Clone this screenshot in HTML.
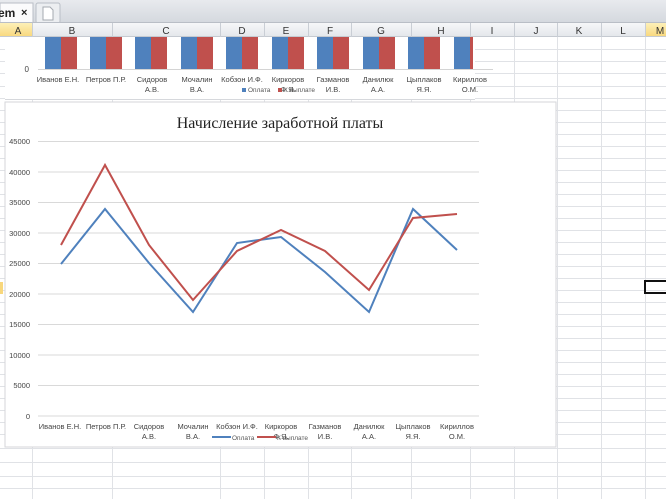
<!DOCTYPE html>
<html><head><meta charset="utf-8"><style>
html,body{margin:0;padding:0;width:666px;height:499px;overflow:hidden;background:#fff;font-family:"Liberation Sans",sans-serif;}
</style></head><body>
<svg width="666" height="499" xmlns="http://www.w3.org/2000/svg" font-family="Liberation Sans, sans-serif">
<defs>
<linearGradient id="tb" x1="0" y1="0" x2="0" y2="1"><stop offset="0" stop-color="#e8eaee"/><stop offset="1" stop-color="#d4d8de"/></linearGradient>
<linearGradient id="hd" x1="0" y1="0" x2="0" y2="1"><stop offset="0" stop-color="#f6f7f9"/><stop offset="1" stop-color="#e3e6ea"/></linearGradient>
<linearGradient id="hs" x1="0" y1="0" x2="0" y2="1"><stop offset="0" stop-color="#fdf0b8"/><stop offset="1" stop-color="#f8d77c"/></linearGradient>
</defs>
<rect x="0" y="0" width="666" height="23" fill="url(#tb)"/>
<rect x="0" y="3" width="33" height="20" fill="#fbfbfc" stroke="#b9bec6"/>
<text x="-2" y="17" font-size="12" font-weight="bold" fill="#222">em</text>
<text x="21" y="16" font-size="11" font-weight="bold" fill="#222">×</text>
<rect x="36" y="3" width="24" height="20" rx="2" fill="#eceef1" stroke="#b9bec6"/>
<path d="M43 7h7l3 3v10h-10z" fill="#fff" stroke="#a4a9b0"/>
<rect x="0" y="22" width="666" height="1" fill="#b9bec6"/>
<rect x="0" y="23" width="666" height="14" fill="url(#hd)"/>
<rect x="0" y="23" width="32" height="14" fill="url(#hs)"/>
<rect x="645" y="23" width="21" height="14" fill="url(#hs)"/>
<rect x="0" y="36" width="666" height="1" fill="#c5cad1"/>
<g stroke="#c9ced5">
<line x1="32.5" y1="23" x2="32.5" y2="37"/><line x1="112.5" y1="23" x2="112.5" y2="37"/><line x1="220.5" y1="23" x2="220.5" y2="37"/><line x1="264.5" y1="23" x2="264.5" y2="37"/><line x1="308.5" y1="23" x2="308.5" y2="37"/><line x1="351.5" y1="23" x2="351.5" y2="37"/><line x1="411.5" y1="23" x2="411.5" y2="37"/><line x1="470.5" y1="23" x2="470.5" y2="37"/><line x1="514.5" y1="23" x2="514.5" y2="37"/><line x1="557.5" y1="23" x2="557.5" y2="37"/><line x1="601.5" y1="23" x2="601.5" y2="37"/><line x1="645.5" y1="23" x2="645.5" y2="37"/>
</g>
<g font-size="10" fill="#333" text-anchor="middle">
<text x="18" y="34">A</text><text x="72" y="34">B</text><text x="166" y="34">C</text><text x="242" y="34">D</text><text x="286" y="34">E</text><text x="330" y="34">F</text><text x="381" y="34">G</text><text x="441" y="34">H</text><text x="492" y="34">I</text><text x="536" y="34">J</text><text x="579" y="34">K</text><text x="623" y="34">L</text><text x="660" y="34">M</text>
</g>
<g stroke="#e0e2e6">
<line x1="32.5" y1="37" x2="32.5" y2="499"/><line x1="112.5" y1="37" x2="112.5" y2="499"/><line x1="220.5" y1="37" x2="220.5" y2="499"/><line x1="264.5" y1="37" x2="264.5" y2="499"/><line x1="308.5" y1="37" x2="308.5" y2="499"/><line x1="351.5" y1="37" x2="351.5" y2="499"/><line x1="411.5" y1="37" x2="411.5" y2="499"/><line x1="470.5" y1="37" x2="470.5" y2="499"/><line x1="514.5" y1="37" x2="514.5" y2="499"/><line x1="557.5" y1="37" x2="557.5" y2="499"/><line x1="601.5" y1="37" x2="601.5" y2="499"/><line x1="645.5" y1="37" x2="645.5" y2="499"/>
<line x1="0" y1="49.5" x2="666" y2="49.5"/><line x1="0" y1="61.5" x2="666" y2="61.5"/><line x1="0" y1="73.5" x2="666" y2="73.5"/><line x1="0" y1="86.5" x2="666" y2="86.5"/><line x1="0" y1="98.5" x2="666" y2="98.5"/><line x1="0" y1="110.5" x2="666" y2="110.5"/><line x1="0" y1="122.5" x2="666" y2="122.5"/><line x1="0" y1="134.5" x2="666" y2="134.5"/><line x1="0" y1="146.5" x2="666" y2="146.5"/><line x1="0" y1="158.5" x2="666" y2="158.5"/><line x1="0" y1="170.5" x2="666" y2="170.5"/><line x1="0" y1="182.5" x2="666" y2="182.5"/><line x1="0" y1="194.5" x2="666" y2="194.5"/><line x1="0" y1="206.5" x2="666" y2="206.5"/><line x1="0" y1="218.5" x2="666" y2="218.5"/><line x1="0" y1="230.5" x2="666" y2="230.5"/><line x1="0" y1="242.5" x2="666" y2="242.5"/><line x1="0" y1="254.5" x2="666" y2="254.5"/><line x1="0" y1="266.5" x2="666" y2="266.5"/><line x1="0" y1="278.5" x2="666" y2="278.5"/><line x1="0" y1="290.5" x2="666" y2="290.5"/><line x1="0" y1="302.5" x2="666" y2="302.5"/><line x1="0" y1="314.5" x2="666" y2="314.5"/><line x1="0" y1="326.5" x2="666" y2="326.5"/><line x1="0" y1="338.5" x2="666" y2="338.5"/><line x1="0" y1="350.5" x2="666" y2="350.5"/><line x1="0" y1="362.5" x2="666" y2="362.5"/><line x1="0" y1="374.5" x2="666" y2="374.5"/><line x1="0" y1="386.5" x2="666" y2="386.5"/><line x1="0" y1="398.5" x2="666" y2="398.5"/><line x1="0" y1="410.5" x2="666" y2="410.5"/><line x1="0" y1="422.5" x2="666" y2="422.5"/><line x1="0" y1="434.5" x2="666" y2="434.5"/><line x1="0" y1="448.5" x2="666" y2="448.5"/><line x1="0" y1="462.5" x2="666" y2="462.5"/><line x1="0" y1="476.5" x2="666" y2="476.5"/><line x1="0" y1="488.5" x2="666" y2="488.5"/>
</g>
<rect x="645" y="281" width="22" height="12" fill="none" stroke="#111" stroke-width="2"/>
<rect x="0" y="282" width="3" height="12" fill="#f8d77c"/>
<rect x="5" y="37" width="470" height="63" fill="#fff"/>
<rect x="5" y="99" width="470" height="1" fill="#d6d8dc"/>
<line x1="38" y1="69.5" x2="493" y2="69.5" stroke="#d4d4d4"/>
<text x="29" y="72" font-size="8" fill="#444" text-anchor="end">0</text>
<g fill="#4f81bd">
<rect x="45" y="37" width="16" height="32"/><rect x="90" y="37" width="16" height="32"/><rect x="135" y="37" width="16" height="32"/><rect x="181" y="37" width="16" height="32"/><rect x="226" y="37" width="16" height="32"/><rect x="272" y="37" width="16" height="32"/><rect x="317" y="37" width="16" height="32"/><rect x="363" y="37" width="16" height="32"/><rect x="408" y="37" width="16" height="32"/><rect x="454" y="37" width="16" height="32"/>
</g>
<g fill="#c0504d">
<rect x="61" y="37" width="16" height="32"/><rect x="106" y="37" width="16" height="32"/><rect x="151" y="37" width="16" height="32"/><rect x="197" y="37" width="16" height="32"/><rect x="242" y="37" width="16" height="32"/><rect x="288" y="37" width="16" height="32"/><rect x="333" y="37" width="16" height="32"/><rect x="379" y="37" width="16" height="32"/><rect x="424" y="37" width="16" height="32"/><rect x="470" y="37" width="3" height="32"/>
</g>
<g font-size="7.5" fill="#444" text-anchor="middle">
<text x="58" y="82">Иванов Е.Н.</text><text x="106" y="82">Петров П.Р.</text>
<text x="152" y="82">Сидоров</text><text x="152" y="92">А.В.</text>
<text x="197" y="82">Мочалин</text><text x="197" y="92">В.А.</text>
<text x="242" y="82">Кобзон И.Ф.</text>
<text x="288" y="82">Киркоров</text><text x="288" y="92">Ф.Я.</text>
<text x="333" y="82">Газманов</text><text x="333" y="92">И.В.</text>
<text x="378" y="82">Данилюк</text><text x="378" y="92">А.А.</text>
<text x="424" y="82">Цыплаков</text><text x="424" y="92">Я.Я.</text>
<text x="470" y="82">Кириллов</text><text x="470" y="92">О.М.</text>
</g>
<rect x="242" y="88" width="4" height="4" fill="#4f81bd"/><text x="248" y="92" font-size="6.5" fill="#555">Оплата</text>
<rect x="278" y="88" width="4" height="4" fill="#c0504d"/><text x="284" y="92" font-size="6.5" fill="#555">К выплате</text>
<rect x="5" y="102" width="551" height="345" fill="#fff" stroke="#d4d6da"/>
<text x="280" y="128" font-family="Liberation Serif, serif" font-size="16" fill="#222" text-anchor="middle">Начисление  заработной платы</text>
<g stroke="#d9d9d9">
<line x1="38" y1="141.5" x2="479" y2="141.5"/><line x1="38" y1="172" x2="479" y2="172"/><line x1="38" y1="202.5" x2="479" y2="202.5"/><line x1="38" y1="233" x2="479" y2="233"/><line x1="38" y1="263.5" x2="479" y2="263.5"/><line x1="38" y1="294" x2="479" y2="294"/><line x1="38" y1="324.5" x2="479" y2="324.5"/><line x1="38" y1="355" x2="479" y2="355"/><line x1="38" y1="385.5" x2="479" y2="385.5"/><line x1="38" y1="416" x2="479" y2="416"/>
</g>
<g font-size="7.5" fill="#444" text-anchor="end">
<text x="30" y="144">45000</text><text x="30" y="175">40000</text><text x="30" y="205">35000</text><text x="30" y="236">30000</text><text x="30" y="266">25000</text><text x="30" y="297">20000</text><text x="30" y="327">15000</text><text x="30" y="358">10000</text><text x="30" y="388">5000</text><text x="30" y="419">0</text>
</g>
<polyline fill="none" stroke="#4f81bd" stroke-width="2" points="61,264 105,209 149,263 193,312 237,243 281,237 325,272 369,312 413,209 457,250"/>
<polyline fill="none" stroke="#c0504d" stroke-width="2" points="61,245 105,165 149,245 193,300 237,251 281,230 325,251 369,290 413,218 457,214"/>
<g font-size="7.5" fill="#444" text-anchor="middle">
<text x="60" y="429">Иванов Е.Н.</text><text x="106" y="429">Петров П.Р.</text>
<text x="149" y="429">Сидоров</text><text x="149" y="439">А.В.</text>
<text x="193" y="429">Мочалин</text><text x="193" y="439">В.А.</text>
<text x="237" y="429">Кобзон И.Ф.</text>
<text x="281" y="429">Киркоров</text><text x="281" y="439">Ф.Я.</text>
<text x="325" y="429">Газманов</text><text x="325" y="439">И.В.</text>
<text x="369" y="429">Данилюк</text><text x="369" y="439">А.А.</text>
<text x="413" y="429">Цыплаков</text><text x="413" y="439">Я.Я.</text>
<text x="457" y="429">Кириллов</text><text x="457" y="439">О.М.</text>
</g>
<line x1="212" y1="437" x2="231" y2="437" stroke="#4f81bd" stroke-width="2"/><text x="232" y="440" font-size="6.5" fill="#555">Оплата</text>
<line x1="257" y1="437" x2="276" y2="437" stroke="#c0504d" stroke-width="2"/><text x="277" y="440" font-size="6.5" fill="#555">К выплате</text>
</svg>
</body></html>
